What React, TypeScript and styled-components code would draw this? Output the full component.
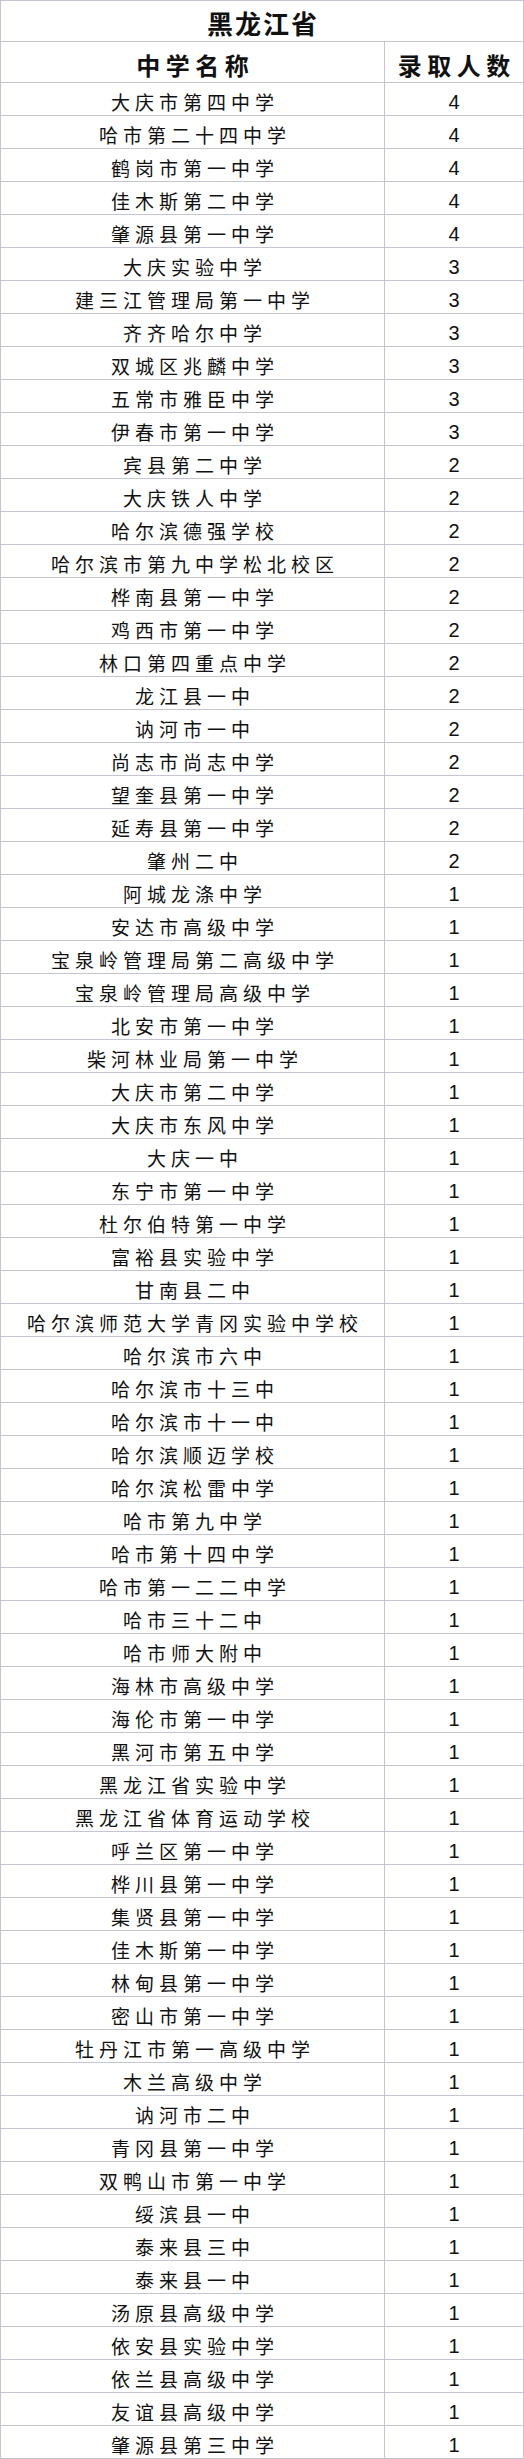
import styled, { createGlobalStyle } from 'styled-components';

const GlobalStyle = createGlobalStyle`
  html, body {
    margin: 0;
    padding: 0;
    background: #fff;
  }
`;

const rows: [string, number][] = [
  ['大庆市第四中学', 4],
  ['哈市第二十四中学', 4],
  ['鹤岗市第一中学', 4],
  ['佳木斯第二中学', 4],
  ['肇源县第一中学', 4],
  ['大庆实验中学', 3],
  ['建三江管理局第一中学', 3],
  ['齐齐哈尔中学', 3],
  ['双城区兆麟中学', 3],
  ['五常市雅臣中学', 3],
  ['伊春市第一中学', 3],
  ['宾县第二中学', 2],
  ['大庆铁人中学', 2],
  ['哈尔滨德强学校', 2],
  ['哈尔滨市第九中学松北校区', 2],
  ['桦南县第一中学', 2],
  ['鸡西市第一中学', 2],
  ['林口第四重点中学', 2],
  ['龙江县一中', 2],
  ['讷河市一中', 2],
  ['尚志市尚志中学', 2],
  ['望奎县第一中学', 2],
  ['延寿县第一中学', 2],
  ['肇州二中', 2],
  ['阿城龙涤中学', 1],
  ['安达市高级中学', 1],
  ['宝泉岭管理局第二高级中学', 1],
  ['宝泉岭管理局高级中学', 1],
  ['北安市第一中学', 1],
  ['柴河林业局第一中学', 1],
  ['大庆市第二中学', 1],
  ['大庆市东风中学', 1],
  ['大庆一中', 1],
  ['东宁市第一中学', 1],
  ['杜尔伯特第一中学', 1],
  ['富裕县实验中学', 1],
  ['甘南县二中', 1],
  ['哈尔滨师范大学青冈实验中学校', 1],
  ['哈尔滨市六中', 1],
  ['哈尔滨市十三中', 1],
  ['哈尔滨市十一中', 1],
  ['哈尔滨顺迈学校', 1],
  ['哈尔滨松雷中学', 1],
  ['哈市第九中学', 1],
  ['哈市第十四中学', 1],
  ['哈市第一二二中学', 1],
  ['哈市三十二中', 1],
  ['哈市师大附中', 1],
  ['海林市高级中学', 1],
  ['海伦市第一中学', 1],
  ['黑河市第五中学', 1],
  ['黑龙江省实验中学', 1],
  ['黑龙江省体育运动学校', 1],
  ['呼兰区第一中学', 1],
  ['桦川县第一中学', 1],
  ['集贤县第一中学', 1],
  ['佳木斯第一中学', 1],
  ['林甸县第一中学', 1],
  ['密山市第一中学', 1],
  ['牡丹江市第一高级中学', 1],
  ['木兰高级中学', 1],
  ['讷河市二中', 1],
  ['青冈县第一中学', 1],
  ['双鸭山市第一中学', 1],
  ['绥滨县一中', 1],
  ['泰来县三中', 1],
  ['泰来县一中', 1],
  ['汤原县高级中学', 1],
  ['依安县实验中学', 1],
  ['依兰县高级中学', 1],
  ['友谊县高级中学', 1],
  ['肇源县第三中学', 1],
];

const line = '#c4c4d4';

const Sheet = styled.div`
  width: 524px;
  box-sizing: border-box;
  border: 1px solid ${line};
  color: #111;
  font-family: 'Noto Sans CJK SC', 'Liberation Sans', sans-serif;
`;

const Title = styled.div`
  height: 41px;
  box-sizing: border-box;
  padding-top: 3px;
  border-bottom: 1px solid ${line};
  display: flex;
  align-items: center;
  justify-content: center;
  font-size: 26px;
  font-weight: 700;
  letter-spacing: 2px;
  text-indent: 2px;
`;

const Row = styled.div<{ $head?: boolean }>`
  display: grid;
  grid-template-columns: 384px 1fr;
  height: ${(p) => (p.$head ? 41 : 33)}px;
  box-sizing: border-box;
  border-bottom: 1px solid ${line};

  &:last-child {
    height: 32px;
    border-bottom: none;
  }
`;

const Cell = styled.div<{ $head?: boolean; $num?: boolean }>`
  display: flex;
  align-items: center;
  justify-content: center;
  box-sizing: border-box;
  white-space: nowrap;
  padding-top: ${(p) => (p.$head ? 5 : p.$num ? 6 : 4)}px;
  font-family: ${(p) =>
    p.$num && !p.$head
      ? "'Liberation Sans', 'Noto Sans CJK SC', sans-serif"
      : "'Noto Sans CJK SC', 'Liberation Sans', sans-serif"};
  font-size: ${(p) => (p.$head ? 24 : p.$num ? 20 : 19)}px;
  font-weight: ${(p) => (p.$head ? 700 : 400)};
  letter-spacing: ${(p) => (p.$head ? '5.5px' : p.$num ? '0' : '5px')};
  text-indent: ${(p) => (p.$head ? '5.5px' : p.$num ? '0' : '5px')};

  &:first-child {
    border-right: 1px solid ${line};
  }
`;

export default function App() {
  return (
    <>
      <GlobalStyle />
      <Sheet>
        <Title>黑龙江省</Title>
        <Row $head>
          <Cell $head>中学名称</Cell>
          <Cell $head $num>录取人数</Cell>
        </Row>
        {rows.map(([name, count]) => (
          <Row key={name}>
            <Cell>{name}</Cell>
            <Cell $num>{count}</Cell>
          </Row>
        ))}
      </Sheet>
    </>
  );
}
